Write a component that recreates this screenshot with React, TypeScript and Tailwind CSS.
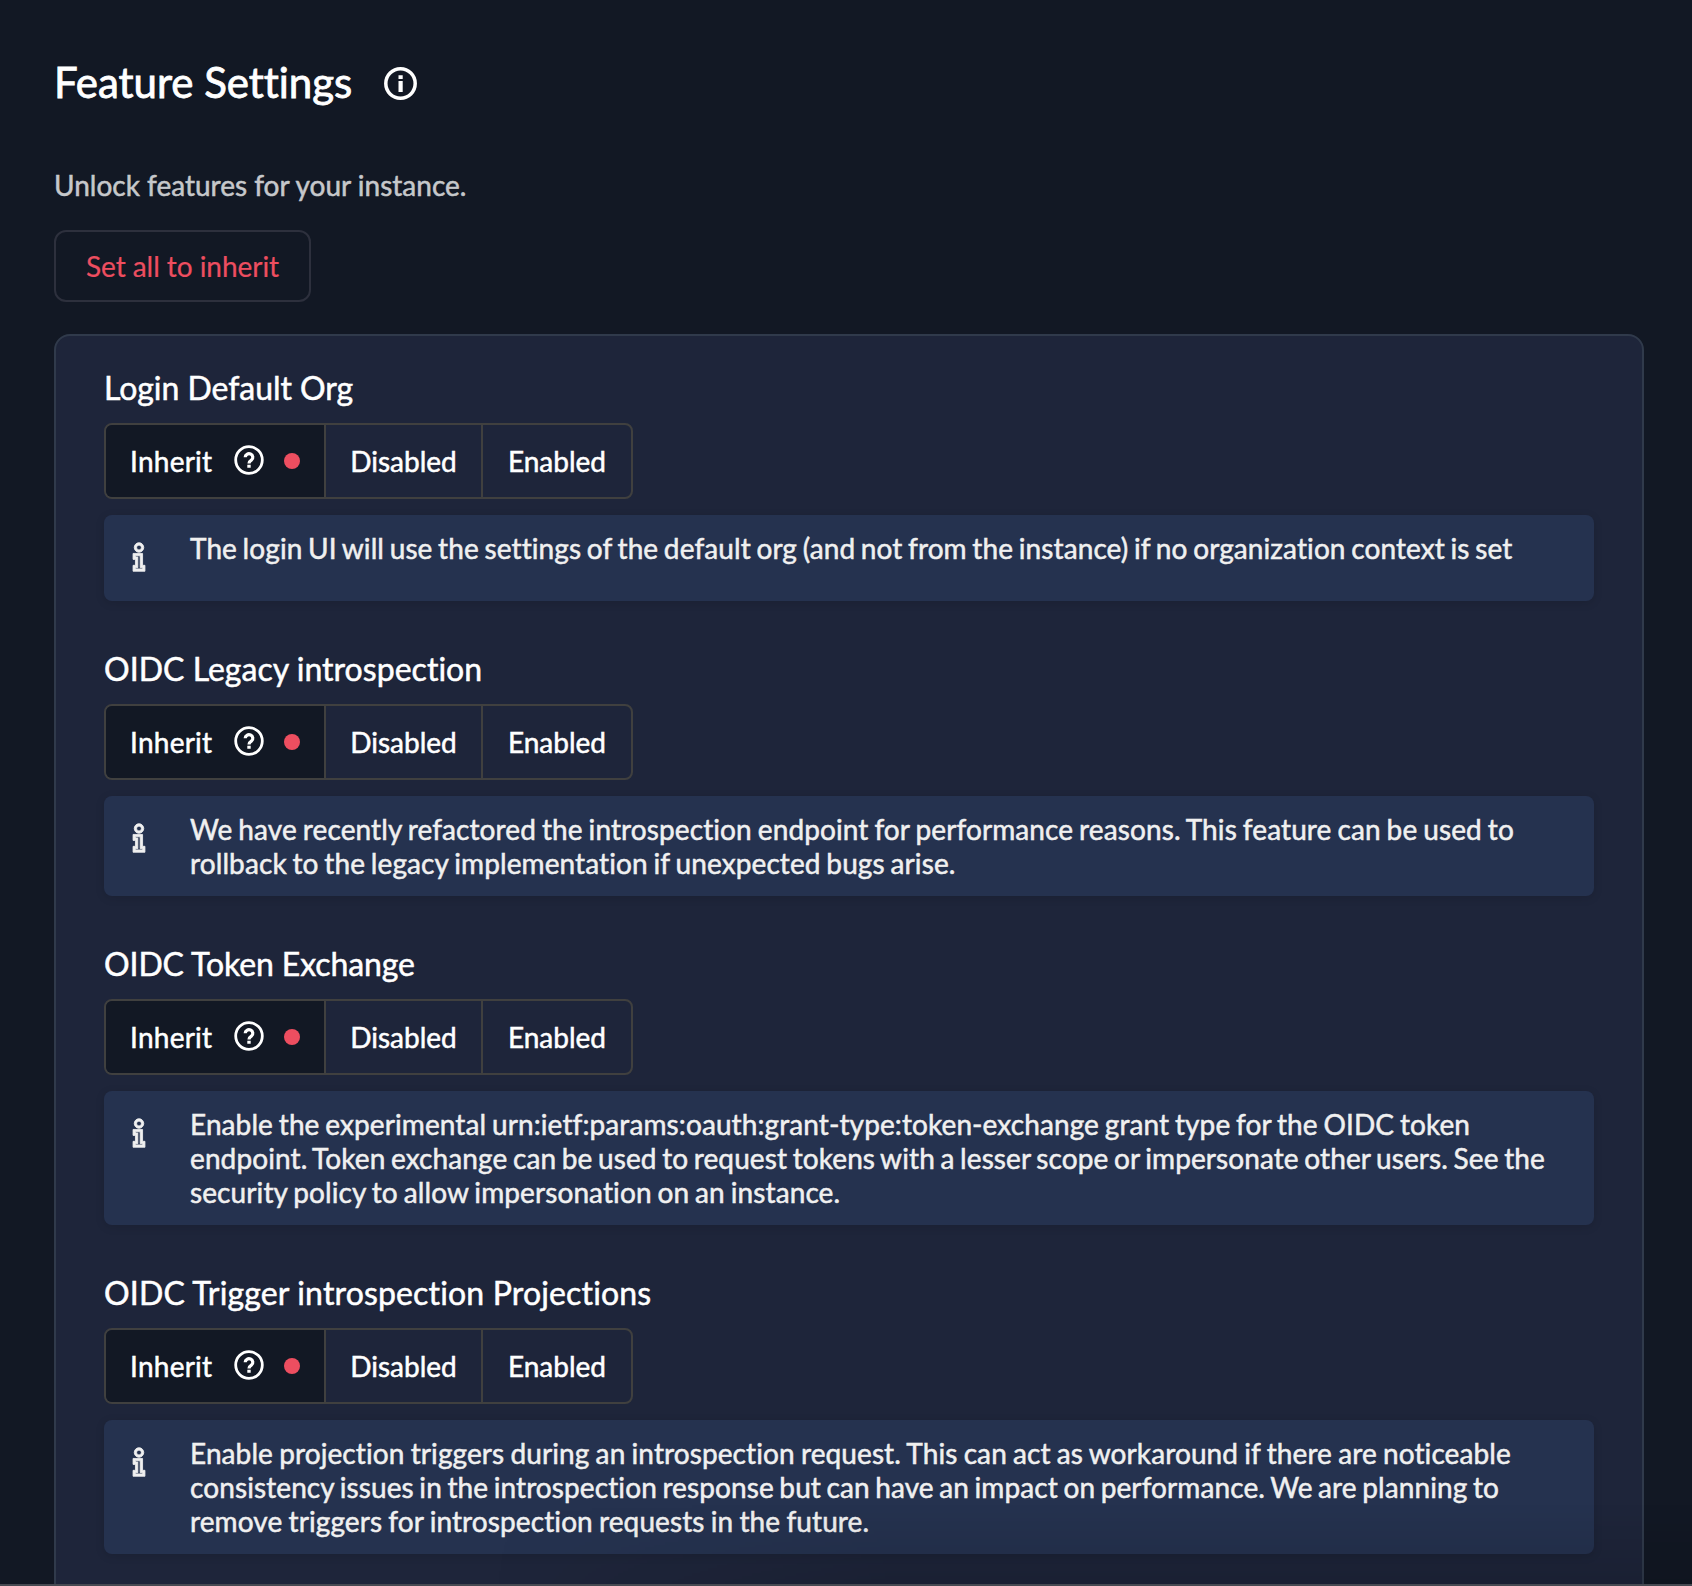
import React from 'react';
import { LiaInfoSolid } from 'react-icons/lia';

type Line = { text: string; spacing: string };
type Feature = { title: string; tracking: string; lines: Line[] };

const features: Feature[] = [
  {
    title: 'Login Default Org',
    tracking: 'tracking-[-0.04px]',
    lines: [
      {
        text: 'The login UI will use the settings of the default org (and not from the instance) if no organization context is set',
        spacing: '[word-spacing:-1.65px]',
      },
    ],
  },
  {
    title: 'OIDC Legacy introspection',
    tracking: 'tracking-[0.03px]',
    lines: [
      {
        text: 'We have recently refactored the introspection endpoint for performance reasons. This feature can be used to',
        spacing: '[word-spacing:-1.3px]',
      },
      {
        text: 'rollback to the legacy implementation if unexpected bugs arise.',
        spacing: '[word-spacing:-1.48px]',
      },
    ],
  },
  {
    title: 'OIDC Token Exchange',
    tracking: 'tracking-[-0.1px]',
    lines: [
      {
        text: 'Enable the experimental urn:ietf:params:oauth:grant-type:token-exchange grant type for the OIDC token',
        spacing: '[word-spacing:-1.5px]',
      },
      {
        text: 'endpoint. Token exchange can be used to request tokens with a lesser scope or impersonate other users. See the',
        spacing: '[word-spacing:-1.69px]',
      },
      {
        text: 'security policy to allow impersonation on an instance.',
        spacing: '[word-spacing:-1.37px]',
      },
    ],
  },
  {
    title: 'OIDC Trigger introspection Projections',
    tracking: 'tracking-[0.155px]',
    lines: [
      {
        text: 'Enable projection triggers during an introspection request. This can act as workaround if there are noticeable',
        spacing: '[word-spacing:-1.09px]',
      },
      {
        text: 'consistency issues in the introspection response but can have an impact on performance. We are planning to',
        spacing: '[word-spacing:-1.74px]',
      },
      {
        text: 'remove triggers for introspection requests in the future.',
        spacing: '[word-spacing:-1.09px]',
      },
    ],
  },
];

function InfoCircle() {
  return (
    <svg viewBox="0 0 33 33" className="size-[33px] shrink-0" fill="none" aria-hidden="true">
      <circle cx="16.5" cy="16.5" r="14.7" stroke="currentColor" strokeWidth="3.5" />
      <path d="M14.5 8.2h4.2v3.8h-4.2zM14.5 14h4.2v11h-4.2z" fill="currentColor" />
    </svg>
  );
}

function QuestionCircle() {
  return (
    <svg viewBox="0 0 30 30" className="mb-0.5 size-[30px] shrink-0" fill="none" aria-hidden="true">
      <circle cx="15" cy="15" r="13.3" stroke="currentColor" strokeWidth="2.8" />
      <path d="M11.2 12.3a3.8 3.6 0 1 1 6.3 2.7c-1.5 1-2.5 1.6-2.5 3.4" stroke="currentColor" strokeWidth="3.2" />
      <path d="M13.3 19.8h3.4v3h-3.4z" fill="currentColor" />
    </svg>
  );
}

function StateToggle() {
  return (
    <div className="flex h-[76px] w-[529px] overflow-hidden rounded-lg border-2 border-[#40403f]">
      <button className="flex w-[220px] items-center border-r-2 border-[#40403f] bg-[#121824] pl-[24px]">
        <span className="w-[104px] text-left tracking-[0.25px]">Inherit</span>
        <QuestionCircle />
        <span className="ml-5 size-4 rounded-full bg-[#ed4e60]" />
      </button>
      <button className="w-[157px] border-r-2 border-[#40403f]">Disabled</button>
      <button className="flex-1">Enabled</button>
    </div>
  );
}

function FeatureSection({ title, tracking, lines }: Feature) {
  return (
    <section className="mb-[46px]">
      <h2 className={`mb-[15px] pt-0.5 text-[32px] leading-10 ${tracking}`}>{title}</h2>
      <StateToggle />
      <div className="mt-4 flex min-h-[86px] items-start rounded-lg bg-[#25324f] py-4 pr-8 pl-4 text-[#f0f0f0] shadow-[0_2px_10px_rgba(0,0,0,0.12)]">
        <LiaInfoSolid className="mt-[7px] size-[38px] shrink-0" stroke="currentColor" strokeWidth={0.7} />
        <p className="ml-8 leading-[34px] tracking-[0.1px] whitespace-nowrap">
          {lines.map((line) => (
            <span key={line.text} className={`block ${line.spacing}`}>
              {line.text}
            </span>
          ))}
        </p>
      </div>
    </section>
  );
}

export default function App() {
  return (
    <main className="relative flex h-[1586px] w-[1692px] flex-col overflow-hidden border-b-2 border-[#474a52] bg-[#121824] pr-12 pl-[54px] font-['Lato',sans-serif] text-[28px] leading-[34px] text-white [font-variant-ligatures:none] [-webkit-text-stroke:0.5px_currentColor]">
      <header className="mt-[58px] flex h-[50px] shrink-0 items-center gap-8">
        <h1 className="-mt-[3px] w-[298px] text-[42px] leading-[50px] whitespace-nowrap tracking-[-0.05px] [-webkit-text-stroke:0.8px_currentColor]">
          Feature Settings
        </h1>
        <InfoCircle />
      </header>
      <p className="mt-[60px] text-[#c6c8cb]">Unlock features for your instance.</p>
      <button className="mt-7 h-[72px] w-[257px] shrink-0 rounded-xl border-2 border-[#2d303d] tracking-[-0.05px] text-[#ed4e60] [-webkit-text-stroke:0.2px_currentColor]">
        Set all to inherit
      </button>
      <div className="mt-8 shrink-0 rounded-2xl border-2 border-[#303a4b] bg-[#1e253a] px-12 pt-[30px]">
        {features.map((feature) => (
          <FeatureSection key={feature.title} {...feature} />
        ))}
      </div>
      <div className="pointer-events-none absolute right-0 bottom-0 h-20 w-[1200px] bg-linear-to-b from-black/0 to-black/12 [mask-image:linear-gradient(to_right,transparent,black_400px)]" />
    </main>
  );
}
